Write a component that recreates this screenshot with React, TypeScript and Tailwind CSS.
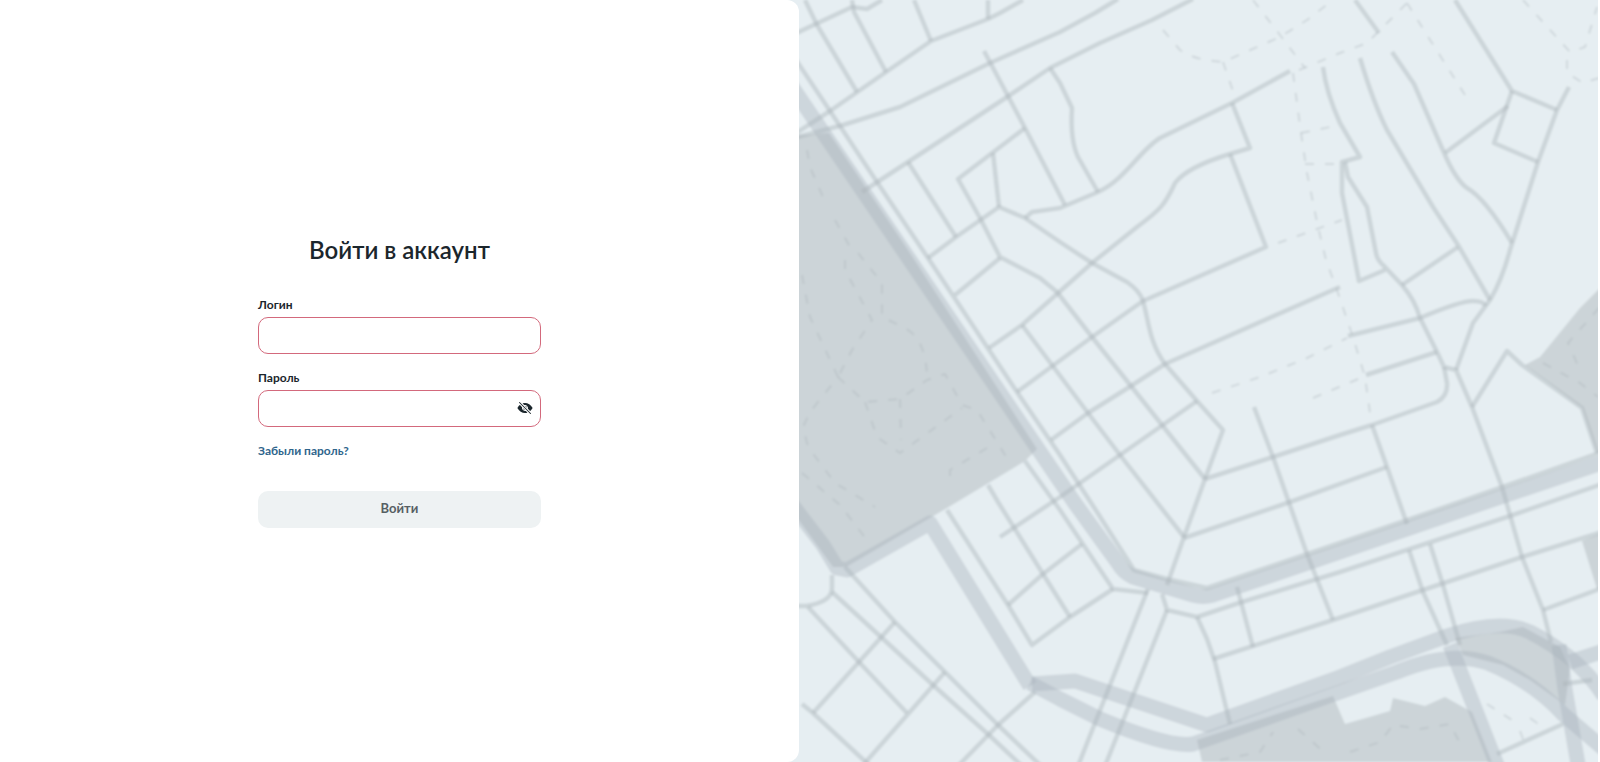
import { useState, type FormEvent } from "react";
import { IoEyeOff, IoEye } from "react-icons/io5";

const AREAS = [
  "M790 136 L829 133 L908 250 L1037 449 L1025 461 L947 508 L846 567 L833 567 L790 508 Z",
  "M1525 365 L1540 357 L1580 308 L1604 284 V453 L1597 453 L1582 408 Z",
  "M1582 541 L1604 532 V589 L1597 589 Z",
  "M1197 740 L1333 696 L1345 724 L1390 711 L1393 698 L1425 706 L1445 697 L1472 712 L1492 762 H1202 Z",
  "M1455 638 L1500 632 L1523 627 L1560 647 L1570 669 L1565 705 L1530 680 L1503 665 L1463 655 Z",
];

const AVENUES = [
  "M786 78 L903 250 L1074 502 L1118 563 Q1123 572 1133 577 L1193 595 Q1203 598 1213 595 L1340 552 L1480 504 L1604 462",
  "M790 502 L823 545 L837 568 L847 570 L930 523 L1030 686",
  "M1032 684 L1075 681 L1207 725 L1340 677 L1390 657 L1447 636 Q1500 618 1530 632 Q1580 658 1604 696",
  "M1030 683 L1060 699 L1100 719 Q1170 748 1193 744 L1340 692 L1397 672 Q1450 650 1488 663 Q1532 681 1563 714 L1604 749",
  "M1450 645 L1499 770",
  "M1559 645 L1565 689 L1579 770",
  "M1570 662 L1604 651",
];

const STREETS = [
  "M790 36 L852 7 L867 9 L882 0",
  "M805 0 L817 25 L857 92",
  "M852 0 L854 12 L886 72",
  "M790 137 L830 111 L886 72 L931 41 L988 19 L1000 13 L1023 0",
  "M790 139 L843 125 L900 107 L990 63 L1060 32 L1095 13 L1118 -1",
  "M914 0 L931 41",
  "M988 0 V19",
  "M862 192 L908 162 L1007 97 L1050 68 L1100 43 L1152 20 L1193 -1",
  "M984 51 L1025 128 L1065 205",
  "M1050 68 L1060 83 L1072 108 Q1070 140 1078 157 L1098 192",
  "M1025 128 L958 179 L980 218 L1000 257 L1040 278 L1057 292 L1092 337 L1131 386 L1205 479",
  "M993 153 L999 207",
  "M928 258 L956 237 L999 207 L1025 218 L1060 242 L1092 263 L1127 282 Q1140 291 1143 301 C1149 322 1149 342 1165 364 L1197 401 L1223 430 L1205 479 L1184 537 L1167 585",
  "M1025 218 L1032 212 L1060 208 L1098 192 C1125 180 1140 150 1160 138 L1232 103 L1290 71",
  "M1232 103 L1250 148 L1230 154 Q1187 167 1175 183 C1165 205 1160 210 1137 227 L1092 263 L1057 294 L1022 325 L989 348",
  "M1230 154 L1266 247 L1143 301 L1092 337 L1017 392",
  "M908 162 L956 237",
  "M790 51 L830 111 L877 182 L928 258 L1017 392 L1060 455 L1097 512 L1134 570 L1167 579 L1207 588 L1340 543 L1460 502 L1602 452",
  "M955 295 L1000 258",
  "M1022 325 L1052 365 L1088 413 L1120 455 L1184 537",
  "M1051 440 L1088 413 L1131 386 L1165 364 L1333 290 L1340 287",
  "M1000 537 L1060 497 L1120 455 L1197 401",
  "M1184 538 L1290 502 L1387 467",
  "M1205 479 L1273 457 L1340 435 L1372 425 L1437 402 Q1448 396 1447 383 L1444 367",
  "M1254 407 L1273 457 L1307 554 L1333 620",
  "M1372 425 L1387 467 L1407 524",
  "M1323 67 Q1326 92 1340 123 L1360 157 L1342 162 V193 L1355 260 L1359 281 L1385 270",
  "M1345 162 L1348 177 L1367 207 L1376 253 Q1377 260 1384 266 L1402 285 Q1415 300 1420 318 L1437 352 L1444 367 L1456 370 L1472 407 L1502 487 L1522 557 L1543 610 L1551 642",
  "M1360 58 Q1373 102 1387 130 L1433 207 L1458 245 L1490 300",
  "M1392 52 L1414 84 L1445 155 Q1456 180 1467 188 Q1485 198 1512 243",
  "M1355 0 L1379 33",
  "M1455 0 L1512 91 L1557 110",
  "M1569 87 L1557 110 L1538 162 L1510 250 Q1502 280 1490 300 L1473 323 L1456 370",
  "M1512 91 L1494 143 L1538 162",
  "M1445 153 L1508 106",
  "M1402 285 L1458 247",
  "M1348 336 L1420 318 Q1460 301 1473 301 Q1484 301 1485 306",
  "M1366 375 L1437 352",
  "M1472 407 L1507 351 L1522 365 L1582 408 L1597 453",
  "M1409 550 L1423 592 L1447 645",
  "M1430 544 L1443 585 L1460 645",
  "M1497 754 L1563 724",
  "M1563 684 L1592 680",
  "M1162 594 L1167 610 L1197 617 L1242 602 L1340 572 L1507 517 L1602 484",
  "M1213 659 L1333 620 L1423 590 L1522 557 L1602 532",
  "M1237 587 L1253 647",
  "M1197 617 L1207 639 L1215 662 L1230 724",
  "M1543 610 L1602 588",
  "M1167 610 L1105 766",
  "M1148 589 L1078 766",
  "M1148 593 L1113 589 L1060 510 L1025 461",
  "M1113 589 L1070 617 L1032 645 L1008 605 L947 510",
  "M1008 605 L1043 574 L1082 544",
  "M988 485 L998 502 L1043 574 L1070 617",
  "M845 567 L895 622 L945 672 L998 725 L1041 766",
  "M832 592 L881 637 L933 685 L989 735 L1022 766",
  "M790 606 H806 Q832 602 832 588 V575",
  "M808 607 L859 662 L907 713",
  "M895 622 L813 713",
  "M802 704 L813 713 L870 766",
  "M945 672 L864 764",
  "M1035 692 L998 725 L958 766",
];

const PATHS = [
  "M1163 30 L1180 50 Q1193 60 1223 62 L1280 37 L1307 20 L1333 0",
  "M1253 0 L1280 35 L1305 68",
  "M1223 62 L1235 97",
  "M1299 70 L1340 53 L1367 43 L1407 3",
  "M1293 73 L1301 133 L1307 173 L1318 227 L1326 260 L1337 290 L1353 337 L1365 377 L1371 420",
  "M1301 133 L1330 127",
  "M1305 164 H1336",
  "M1278 243 L1342 220",
  "M1407 3 L1427 35 L1465 95",
  "M1523 0 L1570 52 L1585 47 L1597 7",
  "M1567 60 V73 L1583 83 L1599 78",
  "M1212 393 L1260 377 L1307 358 L1347 338",
  "M1313 398 L1363 377",
  "M802 275 L810 317 L838 377 L810 412 L803 427 L808 447 L835 483 L875 507",
  "M845 260 V270 L872 320 L852 350 L838 377",
  "M838 377 L865 402 L900 399 L927 380 L945 374 L962 405 L977 410 L997 442 L1010 463",
  "M865 402 L877 437 L900 453 L962 408",
  "M900 399 L901 440",
  "M858 253 L882 283 V317 L905 328 Q927 340 927 380",
  "M807 150 L810 167 L823 197 M835 220 L850 247",
  "M987 448 L950 470 V487",
  "M802 473 L840 505 L867 540",
  "M1543 363 L1580 383 L1598 397",
  "M1599 308 L1568 343 L1580 370",
  "M1350 752 L1380 742 L1393 725 L1420 729 L1450 724 L1463 749",
  "M1220 760 L1260 752 L1273 732",
  "M1298 729 L1327 755",
  "M1487 704 L1515 722",
  "M1530 718 L1537 723 L1542 716 M1520 731 L1523 739 L1530 733",
];

function CityMap() {
  return (
    <svg
      viewBox="799 0 799 762"
      preserveAspectRatio="xMidYMid slice"
      className="block h-full w-full"
      aria-hidden="true"
    >
      <defs>
        <filter id="soften" x="0" y="0" width="100%" height="100%">
          <feGaussianBlur stdDeviation="0.8" />
        </filter>
      </defs>
      <g filter="url(#soften)" fill="none" strokeLinejoin="round">
        <rect x="780" y="-20" width="840" height="802" fill="#e6eef2" />
        {AREAS.map((d) => (
          <path key={d} d={d} fill="#ccd4d8" />
        ))}
        <g stroke="#a8b1bb" strokeOpacity="0.4">
          {AVENUES.map((d) => (
            <path key={d} d={d} strokeWidth="15" />
          ))}
        </g>
        <g stroke="#a9b2b8" strokeOpacity="0.42">
          {STREETS.map((d) => (
            <path key={d} d={d} strokeWidth="4.5" />
          ))}
        </g>
        <g stroke="#a9b2b8" strokeOpacity="0.36">
          {PATHS.map((d) => (
            <path key={d} d={d} strokeWidth="2" strokeDasharray="9 11" />
          ))}
        </g>
      </g>
    </svg>
  );
}

const inputClass =
  "block h-[37px] w-full rounded-[10px] border border-[#d3697c] bg-white px-3 text-sm outline-none";

export default function App() {
  const [visible, setVisible] = useState(false);
  const submit = (e: FormEvent) => e.preventDefault();

  return (
    <div className="min-h-screen bg-white pr-0.5 font-['Lato','Noto_Sans',sans-serif] text-[#1b262c]">
      <div className="flex min-h-screen bg-[#e6eef2]">
        <main className="flex w-1/2 items-center justify-center rounded-r-xl bg-white">
          <form onSubmit={submit} className="flex w-[283px] flex-col">
            <h1 className="text-center text-2xl leading-[30px] font-semibold">Войти в аккаунт</h1>

            <div className="mt-8">
              <label htmlFor="login" className="mb-1 block text-xs leading-4 font-bold">
                Логин
              </label>
              <input id="login" type="text" className={inputClass} />
            </div>

            <div className="mt-4">
              <label htmlFor="password" className="mb-1 block text-xs leading-4 font-bold">
                Пароль
              </label>
              <div className="relative">
                <input id="password" type={visible ? "text" : "password"} className={inputClass} />
                <button
                  type="button"
                  aria-label="Показать пароль"
                  onClick={() => setVisible(!visible)}
                  className="absolute inset-y-0 right-2 flex items-center"
                >
                  {visible ? <IoEye className="size-4" /> : <IoEyeOff className="size-4" />}
                </button>
              </div>
            </div>

            <a href="#" className="mt-4 self-start text-xs leading-4 font-bold text-[#2f658c]">
              Забыли пароль?
            </a>

            <button
              type="submit"
              className="mt-8 h-[37px] rounded-[10px] bg-[#eef2f3] text-[13px] font-bold text-[#565f63]"
            >
              Войти
            </button>
          </form>
        </main>
        <aside className="relative w-1/2">
          <div className="absolute inset-0">
            <CityMap />
          </div>
        </aside>
      </div>
    </div>
  );
}
